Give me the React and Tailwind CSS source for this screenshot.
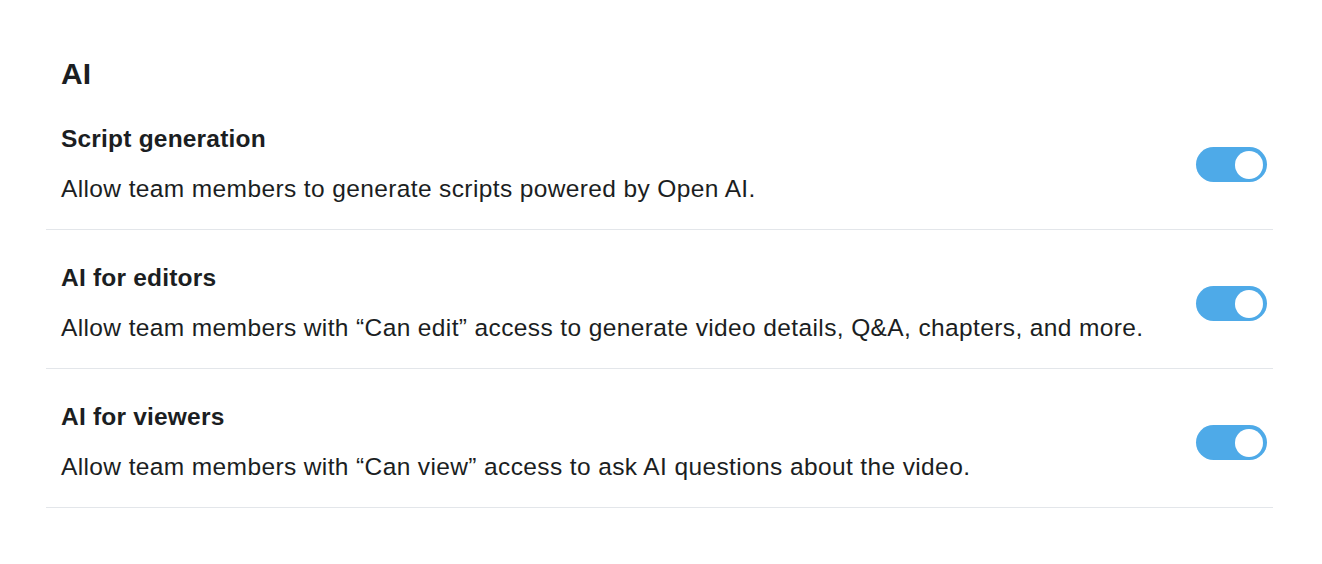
import React from "react";

const rows = [
  { title: "Script generation", desc: "Allow team members to generate scripts powered by Open AI." },
  { title: "AI for editors", desc: "Allow team members with \u201cCan edit\u201d access to generate video details, Q&A, chapters, and more." },
  { title: "AI for viewers", desc: "Allow team members with \u201cCan view\u201d access to ask AI questions about the video." },
];

function Toggle() {
  return (
    <div className="mt-[2px] w-[71px] h-[35px] rounded-full bg-[#4eaae8] flex items-center justify-end pr-[4px] shrink-0">
      <div className="w-[28px] h-[28px] rounded-full bg-white" />
    </div>
  );
}

export default function App() {
  return (
    <div className="w-[1322px] h-[564px] bg-white text-[#1b1e22]" style={{ fontFamily: '"Liberation Sans", Arial, sans-serif' }}>
      <div className="ml-[46px] w-[1227px] pt-[59px]">
        <h2 className="pl-[15px] text-[30px] leading-[30px] font-bold">AI</h2>
        <div className="mt-[37px]">
          {rows.map((r, i) => (
            <div key={i} className={`flex items-center justify-between pl-[15px] pr-[6px] border-b border-[#e3e6ea] pb-[28px] ${i === 0 ? "" : "pt-[35px]"}`}>
              <div className="flex flex-col gap-[25px]">
                <div className="text-[24.5px] leading-[25px] font-bold tracking-[0.2px]">{r.title}</div>
                <div className="text-[24.5px] leading-[25px] tracking-[0.38px]">{r.desc}</div>
              </div>
              <Toggle />
            </div>
          ))}
        </div>
      </div>
    </div>
  );
}
